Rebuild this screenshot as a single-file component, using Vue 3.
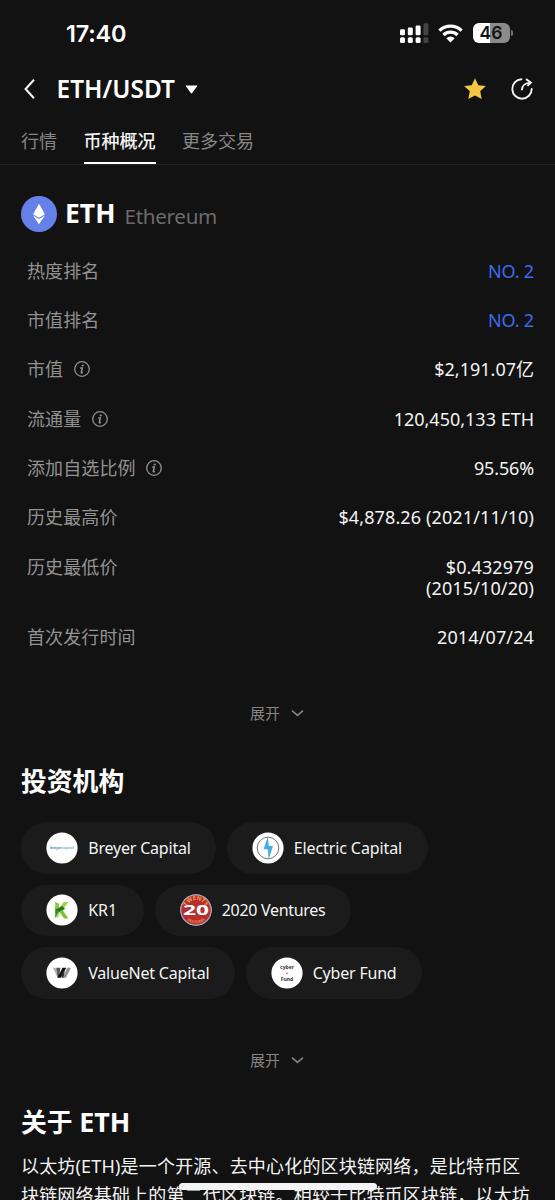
<script setup>
const tabs = [
  { label: '行情', active: false },
  { label: '币种概况', active: true },
  { label: '更多交易', active: false },
]

const rows = [
  { label: '热度排名', value: ['NO. 2'], link: true },
  { label: '市值排名', value: ['NO. 2'], link: true },
  { label: '市值', value: ['$2,191.07亿'], info: true, plain: true },
  { label: '流通量', value: ['120,450,133 ETH'], info: true, plain: true },
  { label: '添加自选比例', value: ['95.56%'], info: true, tight: true },
  { label: '历史最高价', value: ['$4,878.26 (2021/11/10)'] },
  { label: '历史最低价', value: ['$0.432979', '(2015/10/20)'] },
  { label: '首次发行时间', value: ['2014/07/24'] },
]

const investors = [
  [
    { id: 'breyer', name: 'Breyer Capital' },
    { id: 'electric', name: 'Electric Capital' },
  ],
  [
    { id: 'kr1', name: 'KR1' },
    { id: 'twenty', name: '2020 Ventures' },
  ],
  [
    { id: 'valuenet', name: 'ValueNet Capital' },
    { id: 'cyber', name: 'Cyber Fund' },
  ],
]

const about = [
  '以太坊(ETH)是一个开源、去中心化的区块链网络，是比特币区',
  '块链网络基础上的第二代区块链。相较于比特币区块链，以太坊',
]
</script>

<template>
  <div class="screen">
    <div class="status">
      <span class="time">17:40</span>
      <svg class="signal" width="29" height="21" viewBox="0 0 29 21">
        <g fill="#fff">
          <rect x="0" y="6.3" width="5" height="6" rx="1.3" />
          <rect x="7.8" y="4.6" width="5" height="7.7" rx="1.3" />
          <rect x="15.6" y="2.4" width="5" height="9.9" rx="1.3" />
          <rect x="0" y="14.3" width="5" height="5.8" rx="1.5" />
          <rect x="7.8" y="14.3" width="5" height="5.8" rx="1.5" />
          <rect x="15.6" y="14.3" width="5" height="5.8" rx="1.5" />
        </g>
        <rect x="23.4" y="0.3" width="5" height="12" rx="1.3" fill="#444" />
        <rect x="23.4" y="14.3" width="5" height="5.8" rx="1.5" fill="#444" />
      </svg>
      <svg class="wifi" width="25" height="19" viewBox="0 0 25 19">
        <g fill="none" stroke="#fff" stroke-width="3.3">
          <path d="M1.4 6.7a15.8 15.8 0 0 1 22.2 0" />
          <path d="M5.5 11a10 10 0 0 1 14 0" />
        </g>
        <path d="M8.3 14.2a6 6 0 0 1 8.4 0L12.5 18.4z" fill="#fff" />
      </svg>
      <div class="battery">
        <div class="cell"><span>46</span></div>
        <i class="nub"></i>
      </div>
    </div>

    <div class="header">
      <svg class="back" width="11" height="20" viewBox="0 0 11 20">
        <path d="M10 .8 1.6 10 10 19.2" fill="none" stroke="#f4f4f4" stroke-width="2.1" />
      </svg>
      <span class="pair">ETH/USDT</span>
      <svg class="caret" width="13" height="9" viewBox="0 0 13 9">
        <path d="M1.3.4h10.4q1 0 .4.9L7.2 8q-.7.9-1.4 0L.9 1.3Q.3.4 1.3.4z" fill="#fff" />
      </svg>
      <svg class="star" width="22" height="22" viewBox="0 0 22 22">
        <path d="M11 .3l3.3 7 7.5.7-5.6 5.3 1.5 7.7L11 17.4 4.3 21l1.5-7.7L.2 8l7.5-.7z" fill="#f3c742" />
      </svg>
      <svg class="share" width="22" height="22" viewBox="0 0 22 22">
        <g fill="none" stroke="#f2f2f2" stroke-width="1.9">
          <path d="M10.4 1.3A9.7 9.7 0 1 0 20.7 11" stroke-linecap="round" />
          <path d="M10.8 12.3c0-4.4 3.2-7.6 9.1-7.7" />
          <path d="M15 1.1l5 3.4-3.6 3.4" />
        </g>
      </svg>
    </div>

    <div class="tabs">
      <div v-for="tab in tabs" :key="tab.label" class="tab" :class="{ active: tab.active }">{{ tab.label }}</div>
    </div>

    <div class="coin">
      <svg width="36" height="36" viewBox="0 0 36 36">
        <circle cx="18" cy="18" r="18" fill="#6680ea" />
        <path d="M18 7.8 24 18.2 18 21.7 12 18.2z" fill="#fff" />
        <path d="M12 19.4 18 22.9 24 19.4 18 28.2z" fill="#fff" />
      </svg>
      <span class="symbol">ETH</span>
      <span class="name">Ethereum</span>
    </div>

    <div class="facts">
      <div v-for="row in rows" :key="row.label" class="fact">
        <div class="label">
          <span>{{ row.label }}</span>
          <svg v-if="row.info" width="16" height="16" viewBox="0 0 16 16">
            <circle cx="8" cy="8" r="7.3" fill="none" stroke="#929292" stroke-width="1.3" />
            <circle cx="8.7" cy="4.5" r="1.1" fill="#929292" />
            <path d="M6.2 7h2.1l-1 4.3q-.1.6.5.5l1.1-.3" fill="none" stroke="#929292" stroke-width="1.5" />
          </svg>
        </div>
        <div class="value" :class="{ link: row.link, tight: row.tight, plain: row.plain }">
          <div v-for="line in row.value" :key="line">{{ line }}</div>
        </div>
      </div>
    </div>

    <div class="expand first">
      <span>展开</span>
      <svg width="13" height="8" viewBox="0 0 13 8">
        <path d="M1 1.6 6.5 6.4 12 1.6" fill="none" stroke="#80808c" stroke-width="1.7" />
      </svg>
    </div>

    <h2 class="investors-title">投资机构</h2>
    <div class="investors">
      <div v-for="(line, i) in investors" :key="i" class="chip-row">
        <div v-for="inv in line" :key="inv.id" class="chip" :class="inv.id">
          <svg width="32" height="32" viewBox="0 0 32 32">
            <circle cx="16" cy="16" r="15.6" fill="#fff" />
            <text v-if="inv.id === 'breyer'" x="16" y="17" class="logo-breyer" textLength="24"><tspan fill="#4a9cb0">breyer</tspan><tspan fill="#8fc3d0">capital</tspan></text>
            <g v-else-if="inv.id === 'electric'">
              <circle cx="16" cy="16" r="10.8" fill="none" stroke="#555" stroke-width=".8" />
              <path d="M15.8 4.6 11.6 17.3h4.2L16.6 27.6 21 14h-4.2z" fill="#43afe6" />
            </g>
            <g v-else-if="inv.id === 'kr1'">
              <path d="M9.2 8 13 9.5v7L9.2 14z" fill="#8ec63f" />
              <path d="M9.2 14 14 16.5 9.2 24z" fill="#2f8f2e" />
              <path d="M13 14.5 17.8 8h4.7L15.5 17z" fill="#9ad83c" />
              <path d="M10 15.5 16 12l3 2.5-5 4z" fill="#2a7424" />
              <path d="M13 17.5 16.5 16 22.4 24.5h-4.2z" fill="#76c82d" />
              <path d="M9.2 24.5 13 17.5v4.8z" fill="#a2dc42" />
            </g>
            <g v-else-if="inv.id === 'twenty'">
              <circle cx="16" cy="16" r="15.7" fill="#a6a0b8" />
              <circle cx="16" cy="16" r="14.6" fill="#b72e31" />
              <path id="arc-top" d="M6.2 14.5A9.9 9.9 0 0 1 25.8 14.5" fill="none" />
              <path id="arc-bottom" d="M2.6 18A13.6 13.6 0 0 0 29.4 18" fill="none" />
              <text class="logo-arc" fill="#f2a03a"><textPath href="#arc-top" startOffset="50%">TWENTY</textPath></text>
              <text class="logo-arc small" fill="#ef8a3a"><textPath href="#arc-bottom" startOffset="50%">VENTURES</textPath></text>
              <text x="16" y="20.8" class="logo-20" textLength="26" lengthAdjust="spacingAndGlyphs">20</text>
            </g>
            <g v-else-if="inv.id === 'valuenet'">
              <path d="M6.8 10.7h4.2l4 9.8h-3.5z" fill="#b6b6b6" />
              <path d="M10.5 10.7h4l-1.4 7.8-1.5 2z" fill="#555" />
              <path d="M16.5 10.7h3.7l-5.3 10h-3.5z" fill="#101010" />
              <path d="M15.5 17 18.6 12.5 18.2 20.7h-2.5z" fill="#333" />
              <path d="M21 10.7h4l-5 10h-3z" fill="#969696" />
            </g>
            <g v-else>
              <text x="16" y="11.8" class="logo-cyber">cyber</text>
              <circle cx="16" cy="16.2" r=".8" fill="#d63b4b" />
              <text x="16" y="23.6" class="logo-cyber">Fund</text>
            </g>
          </svg>
          <span>{{ inv.name }}</span>
        </div>
      </div>
    </div>

    <div class="expand second">
      <span>展开</span>
      <svg width="13" height="8" viewBox="0 0 13 8">
        <path d="M1 1.6 6.5 6.4 12 1.6" fill="none" stroke="#80808c" stroke-width="1.7" />
      </svg>
    </div>

    <h2 class="about-title">关于 <span>ETH</span></h2>
    <div class="about">
      <div v-for="line in about" :key="line">{{ line }}</div>
    </div>

    <div class="home-bar"></div>
  </div>
</template>

<style>
body {
  background: #121212;
}
</style>

<style scoped>
.screen {
  position: relative;
  box-sizing: border-box;
  width: 555px;
  height: 1200px;
  overflow: hidden;
  background: #121212;
  color: #f4f4f4;
  font-family: "Noto Sans", "Noto Sans CJK SC", sans-serif;
  white-space: nowrap;
}
svg {
  display: block;
  flex: none;
}

.status {
  display: flex;
  align-items: center;
  height: 66px;
  padding: 0 42px 0 66px;
}
.time {
  padding-top: 1px;
  font: 600 23.5px/30px Inter, sans-serif;
  letter-spacing: -0.2px;
  color: #fff;
}
.signal {
  margin-left: auto;
}
.wifi {
  margin-left: 9.5px;
}
.battery {
  display: flex;
  align-items: center;
  margin-left: 9.5px;
}
.cell {
  width: 37px;
  height: 20px;
  border-radius: 6px;
  background: linear-gradient(90deg, #fff 46%, #8b8b8b 46%);
  color: #121212;
  font: 600 17.5px/20px Inter, sans-serif;
  text-align: center;
}
.nub {
  width: 2px;
  height: 6px;
  margin-left: 1.5px;
  border-radius: 0 3px 3px 0;
  background: #777;
}

.header {
  display: flex;
  align-items: center;
  height: 46px;
  padding: 0 22.5px 0 24px;
}
.pair {
  margin-left: 21.6px;
  width: 119.4px;
  font-size: 24.4px;
  line-height: 30px;
  font-weight: 600;
  color: #fff;
}
.caret {
  margin-left: 9px;
}
.star {
  margin-left: auto;
}
.share {
  margin-left: 25px;
}

.tabs {
  display: flex;
  gap: 26.5px;
  height: 52px;
  padding-left: 21px;
  border-bottom: 1px solid #262626;
}
.tab {
  box-sizing: border-box;
  height: 52px;
  padding-top: 16px;
  font-size: 18px;
  line-height: 27px;
  color: #868686;
}
.tab.active {
  color: #fff;
  -webkit-text-stroke: 0.2px #fff;
  border-bottom: 2px solid #fff;
}

.coin {
  display: flex;
  align-items: center;
  height: 36px;
  margin-top: 31px;
  padding-left: 21px;
}
.symbol {
  margin: -2px 0 0 8px;
  width: 51px;
  font-size: 26.5px;
  font-weight: 700;
  color: #fff;
}
.name {
  margin: 4px 0 0 8.5px;
  font-size: 20.6px;
  letter-spacing: -0.3px;
  color: #6b6b6b;
}

.facts {
  margin-top: 14.7px;
  padding: 0 21px 0 27px;
}
.fact {
  display: flex;
  justify-content: space-between;
  padding: 14.05px 0;
  line-height: 21.2px;
  font-size: 18px;
}
.label {
  display: flex;
  align-items: center;
  gap: 10.3px;
  height: 21.2px;
  letter-spacing: 0.12px;
  color: #929292;
}
.label svg {
  margin-top: -1px;
}
.value {
  text-align: right;
  letter-spacing: 0.12px;
}
.value.plain {
  letter-spacing: 0;
}
.value.link,
.value.tight {
  letter-spacing: -0.15px;
}
.link {
  color: #3f6af0;
}

.expand {
  display: flex;
  align-items: center;
  justify-content: center;
  gap: 11px;
  height: 24px;
  padding-right: 1px;
  font-size: 15px;
  color: #858585;
}
.first {
  margin-top: 38.5px;
}
.second {
  margin-top: 48.9px;
}
h2 {
  margin: 0;
  padding-left: 21px;
  height: 36px;
  font-size: 25.8px;
  line-height: 36px;
  font-weight: 700;
  color: #fff;
}
h2 span {
  font-size: 26.8px;
}
.investors-title {
  margin-top: 37.8px;
}
.about-title {
  margin-top: 32.1px;
}

.investors {
  display: flex;
  flex-direction: column;
  gap: 10.8px;
  margin-top: 23.7px;
  padding-left: 21px;
}
.chip-row {
  display: flex;
  gap: 10.5px;
}
.chip {
  box-sizing: border-box;
  display: flex;
  align-items: center;
  gap: 10px;
  height: 51.6px;
  padding-left: 25.2px;
  border-radius: 26px;
  background: #1b1b1b;
  font-size: 16px;
  letter-spacing: -0.2px;
}
.breyer { width: 195px; }
.electric { width: 201.5px; letter-spacing: -0.1px; }
.kr1 { width: 123px; letter-spacing: 0; }
.twenty { width: 196.5px; letter-spacing: -0.3px; }
.valuenet { width: 214px; }
.cyber { width: 176.5px; }

.logo-breyer {
  font: 700 4px "Noto Sans", sans-serif;
  letter-spacing: 0;
  text-anchor: middle;
}
.logo-arc {
  font: 700 5.8px "Noto Sans", sans-serif;
  letter-spacing: 0;
  text-anchor: middle;
}
.logo-arc.small {
  font-size: 3.8px;
}
.logo-20 {
  font: 700 14px "Noto Sans", sans-serif;
  letter-spacing: 0;
  text-anchor: middle;
  fill: #fff;
}
.logo-cyber {
  font: 700 5px "Noto Sans", sans-serif;
  letter-spacing: 0;
  text-anchor: middle;
  fill: #333;
}

.about {
  margin-top: 12px;
  padding-left: 21px;
  font-size: 18px;
  line-height: 29px;
  letter-spacing: 0.18px;
}

.home-bar {
  position: absolute;
  left: 179px;
  top: 1183px;
  width: 198px;
  height: 6.5px;
  border-radius: 4px;
  background: #f4f4f4;
}
</style>
